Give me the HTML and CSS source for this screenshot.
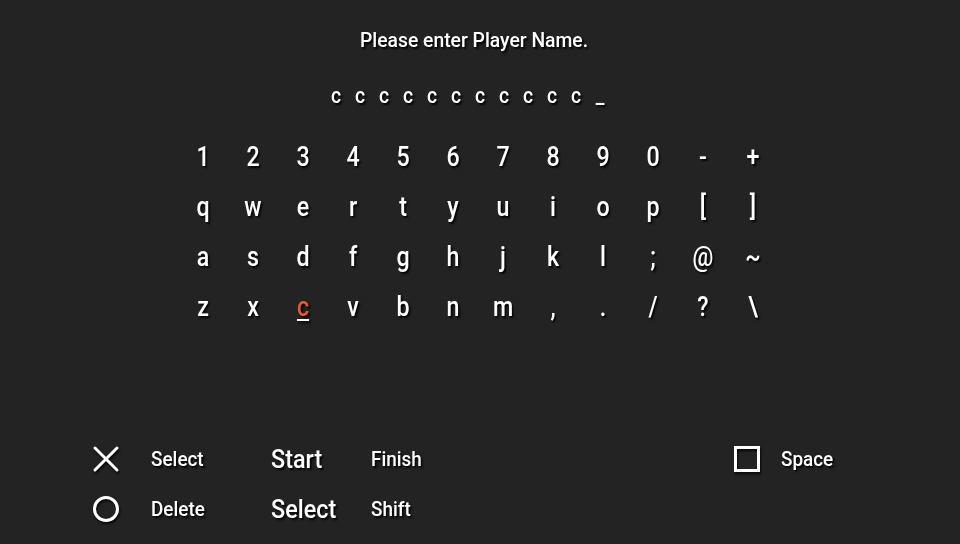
FILE: index.html
```html
<!DOCTYPE html>
<html>
<head>
<meta charset="utf-8">
<link rel="stylesheet" href="styles.css">
</head>
<body>
<div class="screen">
  <div class="title"><span class="cond">Please enter Player Name.</span></div>
  <div class="name">
    <span>c</span><span>c</span><span>c</span><span>c</span><span>c</span><span>c</span><span>c</span><span>c</span><span>c</span><span>c</span><span>c</span><span>_</span>
  </div>
  <div class="keyboard">
    <span class="key">1</span><span class="key">2</span><span class="key">3</span><span class="key">4</span><span class="key">5</span><span class="key">6</span><span class="key">7</span><span class="key">8</span><span class="key">9</span><span class="key">0</span><span class="key">-</span><span class="key">+</span>
    <span class="key">q</span><span class="key">w</span><span class="key">e</span><span class="key">r</span><span class="key">t</span><span class="key">y</span><span class="key">u</span><span class="key">i</span><span class="key">o</span><span class="key">p</span><span class="key">[</span><span class="key">]</span>
    <span class="key">a</span><span class="key">s</span><span class="key">d</span><span class="key">f</span><span class="key">g</span><span class="key">h</span><span class="key">j</span><span class="key">k</span><span class="key">l</span><span class="key">;</span><span class="key">@</span><span class="key">~</span>
    <span class="key">z</span><span class="key">x</span><span class="key active">c</span><span class="key">v</span><span class="key">b</span><span class="key">n</span><span class="key">m</span><span class="key">,</span><span class="key">.</span><span class="key">/</span><span class="key">?</span><span class="key">\</span>
  </div>
  <div class="footer">
    <div class="icon">
      <svg width="28" height="28" viewBox="0 0 28 28"><path d="M3 3 L25 25 M25 3 L3 25" stroke="#fff" stroke-width="3" stroke-linecap="round" fill="none"/></svg>
    </div>
    <div class="label"><span class="cond">Select</span></div>
    <div class="btn"><span class="cond">Start</span></div>
    <div class="label"><span class="cond">Finish</span></div>
    <div class="icon">
      <svg width="28" height="28" viewBox="0 0 28 28"><rect x="2.5" y="2.5" width="23" height="23" stroke="#fff" stroke-width="3" fill="none"/></svg>
    </div>
    <div class="label"><span class="cond">Space</span></div>

    <div class="icon">
      <svg width="28" height="28" viewBox="0 0 28 28"><circle cx="14" cy="14" r="11.5" stroke="#fff" stroke-width="3" fill="none"/></svg>
    </div>
    <div class="label"><span class="cond">Delete</span></div>
    <div class="btn"><span class="cond">Select</span></div>
    <div class="label"><span class="cond">Shift</span></div>
  </div>
</div>
</body>
</html>
```

FILE: styles.css
```css
html, body {
  margin: 0;
  padding: 0;
  background: #232323;
}

.screen {
  width: 960px;
  height: 544px;
  display: flex;
  flex-direction: column;
  font-family: Roboto, "Liberation Sans", sans-serif;
  font-weight: 500;
  color: #ffffff;
  text-shadow: 2px 2px 2px rgba(0, 0, 0, 0.85);
  overflow: hidden;
}

.cond {
  display: inline-block;
  transform: scaleX(0.9);
  transform-origin: left center;
  white-space: nowrap;
}

.title {
  margin-top: 28px;
  height: 24px;
  line-height: 24px;
  font-size: 21px;
  text-align: center;
  padding-right: 12px;
}

.title .cond {
  transform: scaleX(0.92);
  transform-origin: center center;
}

.name {
  margin-top: 32px;
  height: 24px;
  line-height: 24px;
  font-size: 22px;
  display: flex;
  justify-content: center;
  padding-right: 24px;
}

.name span {
  width: 24px;
  text-align: center;
  transform: scaleX(0.88);
}

.keyboard {
  margin-top: 24px;
  margin-left: 178px;
  display: grid;
  grid-template-columns: repeat(12, 50px);
  grid-auto-rows: 50px;
  font-size: 27px;
  line-height: 50px;
}

.key {
  text-align: center;
  transform: scaleX(0.86);
}

.key.active {
  color: #e45a2c;
  text-decoration: underline;
  text-decoration-color: #ffffff;
  text-decoration-thickness: 2px;
  text-underline-offset: 3px;
}

.footer {
  margin-top: 102px;
  margin-left: 92px;
  display: grid;
  grid-template-columns: 59px 120px 100px 362px 48px auto;
  grid-auto-rows: 50px;
  align-items: center;
}

.icon {
  width: 28px;
  height: 28px;
  filter: drop-shadow(1px 2px 1px rgba(0, 0, 0, 0.8));
}

.icon svg {
  display: block;
}

.label {
  font-size: 21px;
  line-height: 50px;
}

.btn {
  font-size: 26px;
  line-height: 50px;
}
```
